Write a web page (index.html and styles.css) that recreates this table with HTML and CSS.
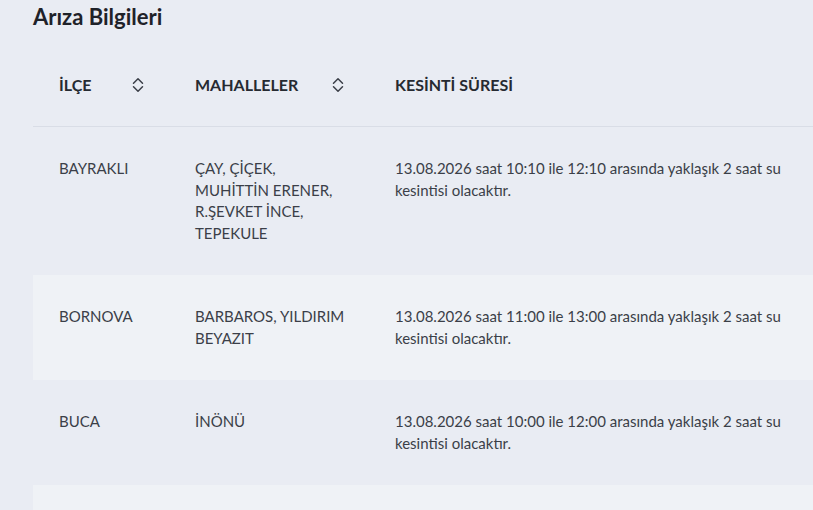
FILE: index.html
```html
<!DOCTYPE html>
<html lang="tr">
<head>
<meta charset="utf-8">
<title>Arıza Bilgileri</title>
<link rel="stylesheet" href="styles.css">
</head>
<body>
<div class="page">
  <h2 class="title">Arıza Bilgileri</h2>
  <div class="table-wrap">
    <table class="grid">
      <colgroup>
        <col class="c1"><col class="c2"><col class="c3">
      </colgroup>
      <thead>
        <tr>
          <th><div class="th-in"><span>İLÇE</span><svg class="sort" viewBox="0 0 14 16" width="14" height="16"><path d="M2.5 6.2 L7 1.8 L11.5 6.2 M2.5 9.8 L7 14.2 L11.5 9.8"/></svg></div></th>
          <th><div class="th-in"><span>MAHALLELER</span><svg class="sort" viewBox="0 0 14 16" width="14" height="16"><path d="M2.5 6.2 L7 1.8 L11.5 6.2 M2.5 9.8 L7 14.2 L11.5 9.8"/></svg></div></th>
          <th><div class="th-in"><span>KESİNTİ SÜRESİ</span></div></th>
        </tr>
      </thead>
      <tbody>
        <tr>
          <td>BAYRAKLI</td>
          <td><p class="hoods">ÇAY, ÇİÇEK, MUHİTTİN ERENER, R.ŞEVKET İNCE, TEPEKULE</p></td>
          <td><p class="desc">13.08.2026 saat 10:10 ile 12:10 arasında yaklaşık 2 saat su kesintisi olacaktır.</p></td>
        </tr>
        <tr class="alt">
          <td>BORNOVA</td>
          <td><p class="hoods">BARBAROS, YILDIRIM BEYAZIT</p></td>
          <td><p class="desc">13.08.2026 saat 11:00 ile 13:00 arasında yaklaşık 2 saat su kesintisi olacaktır.</p></td>
        </tr>
        <tr>
          <td>BUCA</td>
          <td><p class="hoods">İNÖNÜ</p></td>
          <td><p class="desc">13.08.2026 saat 10:00 ile 12:00 arasında yaklaşık 2 saat su kesintisi olacaktır.</p></td>
        </tr>
        <tr class="alt">
          <td>ÇİĞLİ</td>
          <td><p class="hoods">ATATÜRK</p></td>
          <td><p class="desc">13.08.2026 saat 09:00 ile 11:00 arasında yaklaşık 2 saat su kesintisi olacaktır.</p></td>
        </tr>
      </tbody>
    </table>
  </div>
</div>
</body>
</html>
```

FILE: styles.css
```css
html, body {
  margin: 0;
  padding: 0;
  background: #e9ecf3;
  overflow: hidden;
}
body {
  font-family: Lato, "Noto Sans", sans-serif;
  color: #3b3f48;
}
.page {
  padding-left: 33px;
}
.title {
  margin: 0;
  padding-top: 3px;
  font-size: 22px;
  line-height: 28px;
  font-weight: 700;
  color: #1f2229;
  height: 40px;
}
.table-wrap {
  width: 830px;
}
.grid {
  border-collapse: collapse;
  table-layout: fixed;
  width: 830px;
}
.c1 { width: 136px; }
.c2 { width: 200px; }
.c3 { width: 494px; }
.grid th {
  text-align: left;
  font-weight: 700;
  font-size: 16px;
  color: #262a31;
  padding: 31px 24px 31px 26px;
  line-height: 21px;
  border-bottom: 1px solid #d9dde6;
}
.th-in {
  display: flex;
  align-items: center;
  justify-content: space-between;
}
.sort {
  fill: none;
  stroke: #3a3e47;
  stroke-width: 1.5;
  stroke-linecap: round;
  stroke-linejoin: round;
}
.grid td {
  vertical-align: top;
  font-size: 15px;
  line-height: 21.5px;
  padding: 31px 22px 31px 26px;
}
.grid tr.alt td {
  background: #eff2f6;
}
.hoods {
  margin: 0;
  max-width: 153px;
}
.desc {
  margin: 0;
  max-width: 420px;
}
```
